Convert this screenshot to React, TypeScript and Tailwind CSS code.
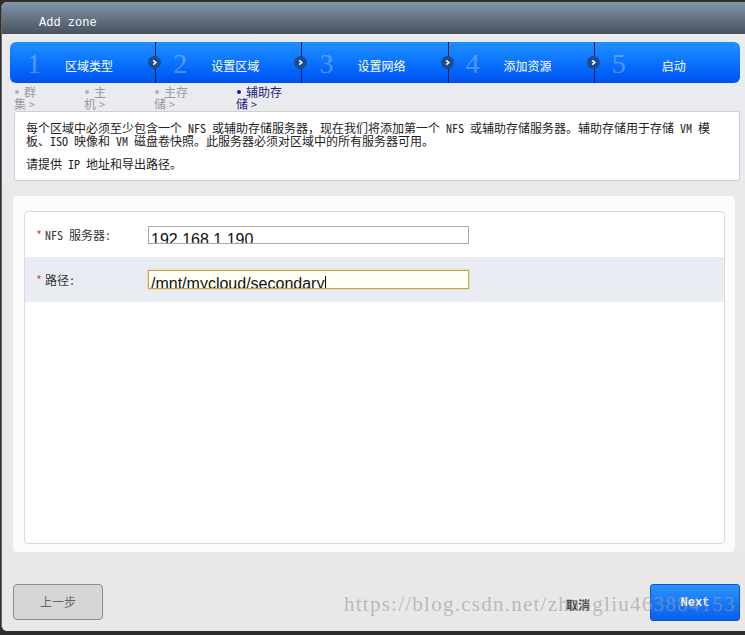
import React from 'react';

const cjk = { fontFamily: '"Noto Sans Mono CJK SC", "Noto Sans CJK SC", "Liberation Sans", sans-serif' };

interface Step {
  num: string;
  label: string;
}

const steps: Step[] = [
  { num: '1', label: '区域类型' },
  { num: '2', label: '设置区域' },
  { num: '3', label: '设置网络' },
  { num: '4', label: '添加资源' },
  { num: '5', label: '启动' },
];

const subSteps = [
  { a: '群', b: '集', w: 'w-[70px]', active: false },
  { a: '主', b: '机', w: 'w-[70px]', active: false },
  { a: '主存', b: '储', w: 'w-[82px]', active: false },
  { a: '辅助存', b: '储', w: 'w-[80px]', active: true },
];

const Chevron = () => (
  <span className="absolute left-[-8px] top-[14px] z-10 flex h-[13px] w-[13px] items-center justify-center rounded-full bg-[#1b4d8c]">
    <svg width="7" height="7" viewBox="0 0 8 8">
      <path d="M2.5 1.5 L5.5 4 L2.5 6.5" stroke="white" strokeWidth="1.8" fill="none" />
    </svg>
  </span>
);

export default function App() {
  return (
    <div className="relative h-[635px] w-[745px] overflow-hidden bg-[#2e2e2e] pl-[1px] pt-[2px]" style={cjk}>
      <div className="flex h-[629px] w-[760px] flex-col overflow-hidden rounded-l-[6px] border-l border-[#6b6b6b] bg-[#e8e8e8]">
        {/* Title */}
        <div className="h-[32px] shrink-0 bg-gradient-to-b from-[#8297ab] to-[#48525d] pl-[37px] pt-[14px] text-[12px] leading-[14px] text-white" style={{ fontFamily: '"Liberation Mono", monospace' }}>
          Add zone
        </div>

        {/* Body top */}
        <div className="bg-[#e9ebee] pl-[8px] pt-[8px]">
          <div className="flex h-[41px] w-[730px] overflow-hidden rounded-[6px] bg-gradient-to-b from-[#2190ff] via-[#0c72ff] to-[#0050f0]">
            {steps.map((s, i) => (
              <div
                key={s.num}
                className={`relative flex h-full items-center ${i === 0 ? 'w-[146px]' : 'w-[147px] border-l border-[#0b1c3e]'}`}
              >
                {i > 0 && <Chevron />}
                <span className="ml-[17px] mt-[3px] w-[38px] text-[28px] leading-none text-white/30" style={{ fontFamily: '"Liberation Serif", serif' }}>
                  {s.num}
                </span>
                <span className={`mt-[7px] text-[12px] text-white ${i === 4 ? 'ml-[12px]' : ''}`}>{s.label}</span>
              </div>
            ))}
          </div>

          {/* Sub steps */}
          <div className="flex pl-[4px] pt-[3px] text-[12px] leading-[12px]">
            {subSteps.map((s) => (
              <div key={s.a} className={`${s.w} ${s.active ? 'text-[#1b1f7a]' : 'text-[#9a9a9a]'}`}>
                <div className="flex items-center">
                  <span className={`ml-[1px] mr-[5px] h-[4px] w-[4px] rounded-full ${s.active ? 'bg-[#1b1f7a]' : 'bg-[#b0b0b0]'}`} />
                  <span>{s.a}</span>
                </div>
                <div>
                  {s.b}
                  <span className="ml-[3px]">&gt;</span>
                </div>
              </div>
            ))}
          </div>

          {/* Info */}
          <div className="mr-[21px] ml-[4px] mt-[1px] h-[70px] rounded-[3px] border border-[#cfcfcf] bg-white px-[11px] pt-[9px] text-[12px] leading-[13px] text-[#222]">
            <div className="whitespace-nowrap">每个区域中必须至少包含一个 NFS 或辅助存储服务器，现在我们将添加第一个 NFS 或辅助存储服务器。辅助存储用于存储 VM 模</div>
            <div className="whitespace-nowrap">板、ISO 映像和 VM 磁盘卷快照。此服务器必须对区域中的所有服务器可用。</div>
            <div className="mt-[10px] whitespace-nowrap">请提供 IP 地址和导出路径。</div>
          </div>
        </div>

        {/* Form panel */}
        <div className="bg-[#e8e9eb] pt-[15px]">
          <div className="ml-[11px] h-[356px] w-[722px] rounded-[4px] bg-[#fbfbfb] pl-[11px] pr-[10px] pt-[15px]">
            <div className="h-[333px] rounded-[4px] border border-[#dadada] bg-white">
              <div className="flex h-[45px] items-center pl-[11px]">
                <div className="flex w-[112px] items-center text-[12px] text-[#333]">
                  <span className="mr-[3px] text-[#d04040]">*</span>NFS 服务器:
                </div>
                <div className="h-[18px] w-[321px] overflow-hidden border border-[#a9a9a9] bg-white pl-[2px]">
                  <div className="pt-[5px] text-[16px] leading-[16px] text-[#111]" style={{ fontFamily: '"Liberation Sans", Arial, sans-serif' }}>
                    192.168.1.190
                  </div>
                </div>
              </div>
              <div className="flex h-[45px] items-center bg-[#e9ecf3] pl-[11px]">
                <div className="flex w-[112px] items-center text-[12px] text-[#333]">
                  <span className="mr-[3px] text-[#d04040]">*</span>路径:
                </div>
                <div className="h-[19px] w-[321px] overflow-hidden border border-[#c9a552] bg-[#fffff5] pl-[2px] shadow-[0_0_2px_#e0c070]">
                  <div className="flex pt-[5px] text-[16px] leading-[16px] text-[#111]" style={{ fontFamily: '"Liberation Sans", Arial, sans-serif' }}>
                    /mnt/mycloud/secondary<span className="ml-[1px] h-[16px] w-[1px] bg-black" />
                  </div>
                </div>
              </div>
            </div>
          </div>
        </div>

        {/* Footer */}
        <div className="relative flex flex-1 items-start bg-[#e8e8e8] pl-[11px] pt-[32px]">
          <div className="flex h-[36px] w-[90px] items-center justify-center rounded-[4px] border border-[#8c8c8c] bg-[#d6d6d8] text-[12px] text-[#666]">
            上一步
          </div>
          <div className="ml-[463px] mt-[12px] text-[12px] font-bold text-[#444]">取消</div>
          <div className="ml-[60px] flex h-[37px] w-[90px] items-center justify-center rounded-[3px] border border-[#0a55c8] bg-gradient-to-b from-[#2a92ff] to-[#0a5ff0] text-[12px] font-bold text-white" style={{ fontFamily: '"Liberation Mono", monospace' }}>
            Next
          </div>
          <div className="pointer-events-none absolute left-[342px] top-[42px] whitespace-nowrap text-[21px] leading-none tracking-[1.25px] text-[#9a9a9a]/60" style={{ fontFamily: '"Liberation Serif", serif' }}>
            https://blog.csdn.net/zhangliu463884153
          </div>
        </div>
      </div>
    </div>
  );
}
